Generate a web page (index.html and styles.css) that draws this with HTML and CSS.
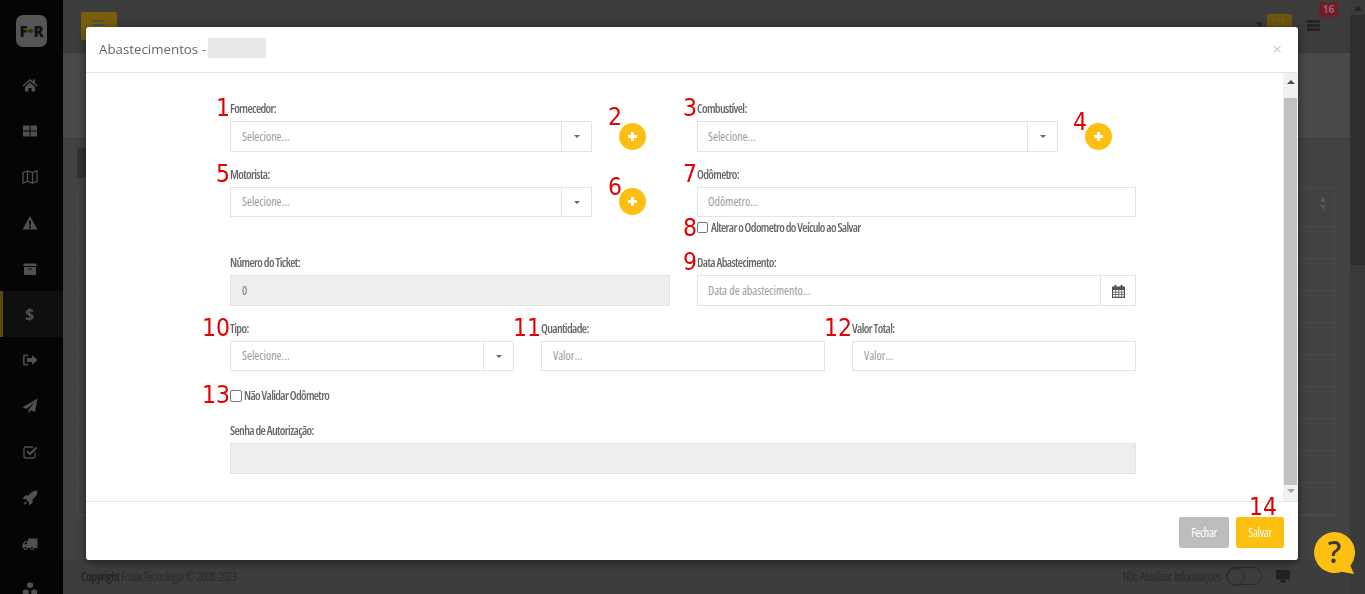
FILE: index.html
```html
<!DOCTYPE html>
<html lang="pt-BR">
<head>
<meta charset="utf-8">
<title>Abastecimentos</title>
<link rel="stylesheet" href="styles.css">
</head>
<body>
<div class="app">
  <aside class="side">
    <div class="logo"><span>F</span><svg class="logo-arrow" viewBox="0 0 10 10"><path d="M0 3.500h5V1l5 4-5 4V6.500H0z"/></svg><span>R</span></div>
    <nav class="menu">
      <a class="mi"><svg viewBox="0 0 16 16"><path d="M8 2 0.500 8.500l1 1L8 4l6.500 5.500 1-1L13 6.300V2.500h-2v2.100zM3 10v4.500h3.500V11h3v3.500H13V10L8 5.600z"/></svg></a>
      <a class="mi"><svg viewBox="0 0 16 16"><path d="M1 2.500h6.500V7.500H1zM8.500 2.500H15V7.500H8.500zM1 8.500h6.500v5H1zM8.500 8.500H15v5H8.500z"/></svg></a>
      <a class="mi"><svg viewBox="0 0 16 16" class="line"><path d="M1 3.500 5.500 2l5 1.500L15 2v10.500L10.500 14l-5-1.500L1 14zM5.500 2v10.500M10.500 3.500V14"/></svg></a>
      <a class="mi"><svg viewBox="0 0 16 16"><path fill-rule="evenodd" d="M8 1 15.500 14.500H.5zM7 5.500l.2 5h1.600l.2-5zM7 11.500v1.800h2v-1.800z"/></svg></a>
      <a class="mi"><svg viewBox="0 0 16 16"><path fill-rule="evenodd" d="M1.500 2.500h13v2.500h-13zM2 6h12v8H2zM6 7.500v1h4v-1z"/></svg></a>
      <a class="mi active"><span class="dollar">$</span></a>
      <a class="mi"><svg viewBox="0 0 16 16"><path d="M6 2.500H3A2 2 0 0 0 1 4.500v7a2 2 0 0 0 2 2h3v-1.600H3.200a.6.6 0 0 1-.6-.6V4.700a.6.6 0 0 1 .6-.6H6zM10 3v3H5v4h5v3l5.500-5z"/></svg></a>
      <a class="mi"><svg viewBox="0 0 16 16"><path d="M15.500.5 13 14l-4.200-1.800L6.500 15.500V12L12.500 4 4.800 11 .5 9.200z"/></svg></a>
      <a class="mi"><svg viewBox="0 0 16 16" class="line"><path d="M13 8.500v4a1.500 1.500 0 0 1-1.500 1.500h-8A1.500 1.500 0 0 1 2 12.500v-8A1.500 1.500 0 0 1 3.500 3H11"/><path class="thick" d="M5 7l3 3 6.500-6.500"/></svg></a>
      <a class="mi"><svg viewBox="0 0 16 16"><path d="M15.500.5c-4 0-6.500 1.500-9 5H3L.5 9h3l3.500 3.500v3l3.500-2.500v-3.500c3.500-2.500 5-5 5-9zM3.500 11.500C2.300 12.500 2 14 2 14.500c.5 0 2-.3 3-1.500z"/></svg></a>
      <a class="mi"><svg viewBox="0 0 16 16"><path fill-rule="evenodd" d="M6 2.500h9.500V12H12a2 2 0 0 1-4 0H5.500a2 2 0 0 1-4 0H.5V8L3 5h3zM5 6.200H3.600L2 8.200h3zM3.500 11a1 1 0 1 0 0 2 1 1 0 0 0 0-2zM10 11a1 1 0 1 0 0 2 1 1 0 0 0 0-2z"/></svg></a>
      <a class="mi"><svg viewBox="0 0 16 16"><path d="M5 1.500 8 .2l3 1.300v3.300L8 6.200 5 4.800zM.8 8.500l3-1.300 3 1.300v3.300l-3 1.400-3-1.400zM9.200 8.500l3-1.300 3 1.300v3.300l-3 1.400-3-1.400z"/></svg></a>
    </nav>
  </aside>
  <div class="main">
    <header class="topbar">
      <div class="burger"><i></i><i></i><i></i></div>
      <div class="top-right">
        <b class="q">?</b>
        <span class="ver">3.2.0</span>
        <svg class="list" viewBox="0 0 14 12"><path d="M0 0h14v3H0zM0 4.500h14v3H0zM0 9h14v3H0z"/></svg>
        <span class="bell">16</span>
      </div>
    </header>
    <section class="band"></section>
    <section class="content">
      <div class="tabbtn"></div>
      <div class="tablewrap">
        <div class="thead"><span class="sort"></span></div>
        <div class="tr"></div><div class="tr"></div><div class="tr"></div><div class="tr"></div><div class="tr"></div><div class="tr"></div><div class="tr"></div><div class="tr"></div><div class="tr"></div>
      </div>
    </section>
    <footer class="foot">
      <span class="foot-left"><b class="copy">Copyright</b> Frotix Tecnologia © 2008-2023</span>
      <div class="foot-right">
        <span>Não Atualizar Informações</span>
        <i class="toggle"></i>
        <svg class="monitor" viewBox="0 0 14 13"><path d="M0 0h14v9.500H8.500V11H10v1.500H4V11h1.500V9.500H0z"/></svg>
      </div>
    </footer>
  </div>
  <div class="pagebar"><span class="up"></span><span class="pagethumb"></span></div>
</div>

<div class="modal">
  <div class="m-head">
    <h4>Abastecimentos - <span class="blur"></span></h4>
    <span class="close">×</span>
  </div>
  <div class="m-body">
    <form class="form">
      <div class="row row-1">
        <div class="cell">
          <label class="lab"><span class="num">1</span>Fornecedor:</label>
          <div class="with-add">
            <div class="select w-l"><span>Selecione...</span><i class="caret"></i></div>
            <button type="button" class="add"><span class="num n2">2</span><i class="plus"></i></button>
          </div>
        </div>
        <div class="cell col-r">
          <label class="lab"><span class="num">3</span>Combustível:</label>
          <div class="with-add">
            <div class="select w-r"><span>Selecione...</span><i class="caret"></i></div>
            <button type="button" class="add"><span class="num n4">4</span><i class="plus"></i></button>
          </div>
        </div>
      </div>
      <div class="row row-2">
        <div class="cell">
          <label class="lab"><span class="num">5</span>Motorista:</label>
          <div class="with-add">
            <div class="select w-l s-30"><span>Selecione...</span><i class="caret"></i></div>
            <button type="button" class="add"><span class="num n6">6</span><i class="plus"></i></button>
          </div>
        </div>
        <div class="cell col-r">
          <label class="lab"><span class="num">7</span>Odômetro:</label>
          <div class="input s-30">Odômetro...</div>
          <label class="check c-small"><span class="num n-check">8</span><i class="box"></i>Alterar o Odometro do Veículo ao Salvar</label>
        </div>
      </div>
      <div class="row row-3">
        <div class="cell">
          <label class="lab">Número do Ticket:</label>
          <div class="input disabled">0</div>
        </div>
        <div class="cell col-r">
          <label class="lab"><span class="num">9</span>Data Abastecimento:</label>
          <div class="input date"><span>Data de abastecimento...</span>
            <i class="cal"><svg viewBox="0 0 13 14"><path fill-rule="evenodd" d="M0 2.500h2.500V1h2v1.500h4V1h2v1.500H13V14H0zM1.200 6v1.700h2.200V6zM4.200 6v1.700h2.200V6zM7.200 6v1.700h2.200V6zM10.100 6v1.700h1.700V6zM1.200 8.500v1.700h2.200V8.500zM4.200 8.500v1.700h2.200V8.500zM7.200 8.500v1.700h2.200V8.500zM10.100 8.500v1.700h1.700V8.500zM1.200 11v1.700h2.200V11zM4.200 11v1.700h2.200V11zM7.200 11v1.700h2.200V11zM10.100 11v1.700h1.700V11z"/></svg></i>
          </div>
        </div>
      </div>
      <div class="row3 row-4">
        <div class="cell">
          <label class="lab"><span class="num">10</span>Tipo:</label>
          <div class="select s-30"><span>Selecione...</span><i class="caret"></i></div>
        </div>
        <div class="cell">
          <label class="lab"><span class="num">11</span>Quantidade:</label>
          <div class="input s-30">Valor...</div>
        </div>
        <div class="cell">
          <label class="lab"><span class="num">12</span>Valor Total:</label>
          <div class="input s-30">Valor...</div>
        </div>
      </div>
      <label class="check c-big"><span class="num n-check">13</span><i class="box"></i>Não Validar Odômetro</label>
      <div class="cell c-full">
        <label class="lab">Senha de Autorização:</label>
        <div class="input disabled"></div>
      </div>
    </form>
    <div class="m-scroll"><span class="ar up"></span><span class="thumb"></span><span class="ar down"></span></div>
  </div>
  <div class="m-foot">
    <button type="button" class="btn grey">Fechar</button>
    <button type="button" class="btn yellow"><span class="num n-save">14</span>Salvar</button>
  </div>
</div>

<svg class="help" viewBox="0 0 41 42">
  <path d="M20.500 0a20.500 20.500 0 1 0 7 39.800L40 42l-3.600-8.500A20.500 20.500 0 0 0 20.500 0z" fill="#fdbf10"/>
  <text x="20.500" y="31" text-anchor="middle" class="help-q">?</text>
</svg>
</body>
</html>
```

FILE: styles.css
```css
* { box-sizing: border-box; }
html, body { margin: 0; height: 594px; overflow: hidden; }
body {
  font-family: "Open Sans", "Noto Sans", sans-serif;
  font-stretch: 75%;
  font-size: 12px;
  color: #6b6b6b;
  background: #3d3d3d;
}
.app { display: flex; height: 594px; }

/* dimmed page behind the dialog */
.side { width: 63px; flex: none; background: #050505; }
.logo {
  width: 31px; height: 32px; margin: 15px 0 0 16px;
  background: #555; border-radius: 7px;
  display: flex; align-items: center; justify-content: center;
}
.logo span { color: #111; font: 900 15px/1 "Open Sans", sans-serif; }
.logo-arrow { width: 8px; height: 8px; fill: #3e3208; margin: 0 -1px; }
.menu { margin-top: 15px; display: flex; flex-direction: column; }
.mi {
  height: 45.900px; display: flex; align-items: center; justify-content: center;
  border-left: 3px solid transparent; padding-right: 7px;
}
.mi svg { width: 16px; height: 16px; fill: #505050; }
.mi svg.line { fill: none; stroke: #505050; stroke-width: 1.300; }
.mi svg .thick { stroke-width: 2.200; }
.mi.active { background: #0f0f0f; border-left-color: #5e4a0c; }
.dollar { color: #505050; font: 700 16px/1 "Open Sans", sans-serif; }

.main { flex: 1; display: flex; flex-direction: column; min-width: 0; }
.topbar {
  height: 53px; flex: none; background: #3c3c3c;
  display: flex; justify-content: space-between; padding: 12px 0 0 18px; position: relative;
}
.burger {
  width: 36px; height: 28px; background: #7a5e0c; border-radius: 2px;
  display: flex; flex-direction: column; gap: 2px; align-items: center; padding-top: 8px;
}
.burger i { width: 12px; height: 2px; background: #4d4d4d; }
.top-right { display: flex; align-items: flex-start; padding-right: 30px; }
.q { color: #1c1c1c; font: 700 12px/1 "Open Sans", sans-serif; margin-top: 9px; }
.ver {
  background: #6a5410; color: #7d6a1c; font-size: 8px; line-height: 16px;
  padding: 0 4px; margin: 2px 15px 0 5px; border-radius: 2px; width: 25px;
}
.list { width: 13px; height: 11px; fill: #222; margin-top: 8px; }
.bell {
  position: absolute; left: 1256px; top: 2px; width: 19px; height: 15px;
  background: #6d1f27; color: #a0656b; font: 700 10px/15px "Open Sans", sans-serif;
  text-align: center; border-radius: 2px;
}
.band { height: 86px; flex: none; background: #494949; border-bottom: 1px solid #3a3a3a; }
.content { flex: 1; background: #424242; padding: 9px 15px 0 14px; position: relative; overflow: hidden; }
.tabbtn { width: 40px; height: 30px; background: #333; border-radius: 2px; }
.tablewrap { margin-top: 9px; border: 1px solid #4a4a4a; }
.thead { height: 39px; display: flex; justify-content: flex-end; padding: 9px 7px 0 0; border-bottom: 1px solid #4a4a4a; }
.sort { display: block; width: 7px; height: 13px; position: relative; }
.sort::before, .sort::after {
  content: ""; position: absolute; left: 0; width: 0; height: 0;
  border-left: 3.500px solid transparent; border-right: 3.500px solid transparent;
}
.sort::before { top: 0; border-bottom: 5px solid #585858; }
.sort::after { bottom: 0; border-top: 5px solid #585858; }
.tr { height: 32px; border-bottom: 1px solid #4a4a4a; }
.foot {
  height: 34px; flex: none; background: #3d3d3d; color: #2a2a2a;
  display: flex; justify-content: space-between; align-items: center;
  padding: 0 60px 2px 18px; font-size: 12px;
}
.foot-left { letter-spacing: -.45px; }
.copy { font-weight: 600; color: #222; }
.foot-right { display: flex; align-items: center; letter-spacing: -.4px; }
.toggle {
  width: 36px; height: 18px; border: 1px solid #2a2a2a; border-radius: 9px;
  margin: 0 14px 0 5px; display: block; position: relative;
}
.toggle::before {
  content: ""; position: absolute; left: 0; top: 0; width: 16px; height: 16px;
  border: 1px solid #2a2a2a; border-radius: 50%;
}
.monitor { width: 14px; height: 13px; fill: #222; }
.pagebar { width: 15px; flex: none; background: #3a3a3a; display: flex; flex-direction: column; align-items: center; }
.pagebar .up { width: 0; height: 0; border: 4px solid transparent; border-top: 0; border-bottom: 5px solid #222; margin: 6px 0 4px; }
.pagethumb { width: 15px; height: 250px; background: #2f2f2f; }

/* dialog */
.modal {
  position: fixed; left: 86px; top: 27px; width: 1212px; height: 533px;
  background: #fff; border-radius: 3px; box-shadow: 0 2px 10px rgba(0,0,0,.5);
  display: flex; flex-direction: column; color: #666;
}
.m-head {
  height: 46px; flex: none; border-bottom: 1px solid #e5e5e5;
  display: flex; justify-content: space-between; padding: 0 16px 0 13px; align-items: center;
}
.m-head h4 { margin: 0; font: 400 13.300px/1 "Open Sans", sans-serif; font-stretch: 100%; color: #666; display: flex; align-items: center; gap: 2px; }
.blur { width: 58px; height: 20px; background: #e8e8e8; display: block; margin-bottom: 4px; }
.close { color: #ccc; font: 400 17px/1 "Open Sans", sans-serif; margin-top: -2px; }

.m-body { height: 429px; flex: none; display: flex; border-bottom: 1px solid #e5e5e5; }
.form { flex: 1; padding: 27px 0 0 144px; }
.m-scroll { width: 15px; background: #f1f1f1; display: flex; flex-direction: column; align-items: center; }
.m-scroll .ar { width: 0; height: 0; border: 4px solid transparent; }
.m-scroll .ar.up { border-top: 0; border-bottom-width: 4px; border-bottom-color: #505050; margin: 6px 0 0; height: 5px; }
.m-scroll .thumb { width: 13px; height: 387px; background: #c1c1c1; margin-top: 14px; }
.m-scroll .ar.down { border-bottom: 0; border-top-color: #a3a3a3; margin-top: 4px; }

.row { display: grid; grid-template-columns: 440px 439px; column-gap: 27px; width: 906px; }
.row3 { display: grid; grid-template-columns: 284px 284px 284px; column-gap: 27px; width: 906px; }
.row-2 { margin-top: 14px; height: 88px; }
.row-4 { margin-top: 14px; }
.cell { position: relative; min-width: 0; }
.c-full { width: 906px; margin-top: 20px; }

.lab {
  display: block; height: 21px; line-height: 18px; font-size: 12px; font-weight: 600;
  letter-spacing: -.62px; color: #666; position: relative;
}
.num {
  position: absolute; right: 100%; top: -5px; color: #e30000;
  font: 400 24.500px/1.100 "DejaVu Sans", sans-serif; font-stretch: 75%; white-space: nowrap;
  letter-spacing: 0;
}
.with-add { display: flex; align-items: center; gap: 27px; }

.select, .input {
  height: 31px; border: 1px solid #e3e3e3; background: #fff;
  color: #9a9a9a; font-size: 12px; line-height: 29px; padding-left: 11px;
}
.col-r .select, .col-r .input { padding-left: 10px; }
.s-30 { height: 30px; line-height: 28px; }
.select { display: flex; justify-content: space-between; padding-right: 0; position: relative; }
.w-l { width: 362px; flex: none; }
.w-r { width: 361px; flex: none; }
.caret {
  width: 30px; flex: none; border-left: 1px solid #e3e3e3; position: relative; display: block;
}
.caret::after {
  content: ""; position: absolute; left: 12px; top: 13px; width: 0; height: 0;
  border: 3.500px solid transparent; border-top-color: #666; border-bottom: 0;
}
.input.disabled { background: #eee; color: #777; }
.date { display: flex; justify-content: space-between; padding-right: 0; }
.cal { width: 35px; border-left: 1px solid #e3e3e3; display: flex; align-items: center; justify-content: center; }
.cal svg { width: 13px; height: 14px; fill: #555; }

.add {
  position: relative; width: 27px; height: 27px; border-radius: 50%; border: 0; padding: 0;
  background: #fdbf10; flex: none; display: flex; align-items: center; justify-content: center;
  margin-top: -1px;
}
.plus { display: block; width: 9px; height: 9px; position: relative; }
.plus::before, .plus::after { content: ""; position: absolute; background: #fff; }
.plus::before { left: 0; top: 3px; width: 9px; height: 3px; }
.plus::after { left: 3px; top: 0; width: 3px; height: 9px; }
.n2 { right: auto; left: -11px; top: -19px; }
.n4 { right: auto; left: -12px; top: -14px; }
.n6 { right: auto; left: -11px; top: -14px; }

.check { display: flex; align-items: center; position: relative; color: #666; font-weight: 600; }
.box {
  display: block; width: 11px; height: 11px; border: 1px solid #777; border-radius: 2px;
  background: #fff; margin-right: 3px; flex: none;
}
.c-small { margin-top: 5px; font-size: 12px; height: 11px; letter-spacing: -.65px; }
.c-big { margin-top: 18px; height: 13px; font-size: 12px; letter-spacing: -.65px; }
.c-big .box { width: 12px; height: 12px; margin-right: 2px; }
.n-check { top: -7px; }

.m-foot {
  flex: 1; display: flex; justify-content: flex-end; gap: 7px; padding: 15px 14px 0 0;
}
.btn {
  position: relative; height: 31px; border: 0; border-radius: 2px; color: #fff;
  font: 400 12px/1 "Open Sans", sans-serif; font-stretch: 75%; letter-spacing: -.3px; padding: 0;
}
.grey { width: 50px; background: #bdbdbd; }
.yellow { width: 48px; background: #fdbf10; }
.n-save { right: 7px; top: -23px; padding: 0; }

.help { position: fixed; left: 1314px; top: 532px; width: 41px; height: 42px; }
.help-q { font: 600 30px "Open Sans", sans-serif; fill: #3a3a3a; }
```
